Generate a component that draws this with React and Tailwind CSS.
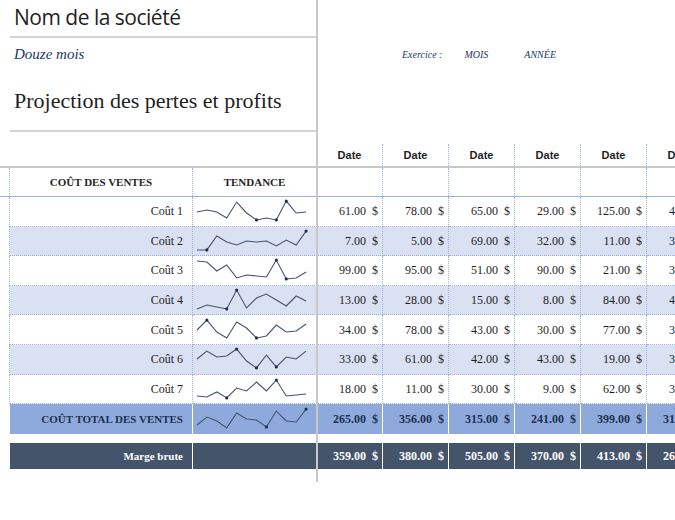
import React from "react";

const cols = "grid grid-cols-[10px_183px_124px_66px_66px_66px_66px_66px_66px]";

const rows = [
  { label: "Coût 1", vals: ["61.00", "78.00", "65.00", "29.00", "125.00", "45.00"], line: [0.55, 0.45, 0.55, 0.85, 0.05, 0.6, 0.95, 0.85, 0.95, 0.0, 0.6, 0.55], dots: [6, 8, 9] },
  { label: "Coût 2", vals: ["7.00", "5.00", "69.00", "32.00", "11.00", "31.00"], line: [0.95, 0.95, 0.25, 0.55, 0.7, 0.5, 0.55, 0.5, 0.75, 0.45, 0.7, 0.0], dots: [1, 11] },
  { label: "Coût 3", vals: ["99.00", "95.00", "51.00", "90.00", "21.00", "36.00"], line: [0.05, 0.1, 0.55, 0.25, 0.9, 0.75, 0.8, 0.85, 0.0, 0.95, 0.9, 0.6], dots: [8, 9] },
  { label: "Coût 4", vals: ["13.00", "28.00", "15.00", "8.00", "84.00", "43.00"], line: [0.95, 0.75, 0.85, 0.95, 0.0, 0.9, 0.4, 0.2, 0.5, 0.8, 0.3, 0.55], dots: [3, 4] },
  { label: "Coût 5", vals: ["34.00", "78.00", "43.00", "30.00", "77.00", "37.00"], line: [0.5, 0.0, 0.6, 0.9, 0.1, 0.4, 0.9, 0.8, 0.25, 0.6, 0.55, 0.2], dots: [1, 6] },
  { label: "Coût 6", vals: ["33.00", "61.00", "42.00", "43.00", "19.00", "38.00"], line: [0.5, 0.1, 0.4, 0.35, 0.0, 0.6, 0.95, 0.3, 0.9, 0.4, 0.5, 0.1], dots: [4, 6, 8] },
  { label: "Coût 7", vals: ["18.00", "11.00", "30.00", "9.00", "62.00", "39.00"], line: [0.85, 0.9, 0.65, 0.95, 0.45, 0.6, 0.15, 0.6, 0.05, 0.85, 0.8, 0.75], dots: [3, 8] },
];

const total = { vals: ["265.00", "356.00", "315.00", "241.00", "399.00", "312.00"], line: [0.8, 0.4, 0.6, 0.95, 0.2, 0.5, 0.55, 0.9, 0.1, 0.6, 0.65, 0.0], dots: [7, 11] };
const marge = ["359.00", "380.00", "505.00", "370.00", "413.00", "260.00"];

function Spark({ line, dots }) {
  const pts = line.map((y, i) => [4 + i * 10, 3 + y * 20]);
  return (
    <svg width="124" height="26" viewBox="0 0 124 26">
      <polyline points={pts.map((p) => p.join(",")).join(" ")} fill="none" stroke="#44546a" strokeWidth="1.1" />
      {dots.map((d) => (
        <circle key={d} cx={pts[d][0]} cy={pts[d][1]} r="1.6" fill="#1f2f4f" />
      ))}
    </svg>
  );
}

const serif = { fontFamily: "'Liberation Serif', serif" };

export default function App() {
  return (
    <div className="relative w-[675px] h-[520px] overflow-hidden bg-white text-[#1f1f1f]" style={{ fontFamily: "'Liberation Sans', sans-serif" }}>
      {/* header */}
      <div className="w-[307px] h-[38px] ml-[10px] border-b-2 border-[#d4d4d4] flex items-center pl-[4px] text-[21px]" style={{ fontFamily: "'Open Sans', sans-serif", letterSpacing: "-0.5px" }}>
        Nom de la société
      </div>
      <div className="flex h-[33px] items-center">
        <div className="w-[317px] pl-[14px] italic text-[15px] text-[#203864]" style={serif}>Douze mois</div>
        <div className="flex italic text-[10px] text-[#203864]" style={serif}>
          <span className="ml-[85px]">Exercice :</span>
          <span className="ml-[22px]">MOIS</span>
          <span className="ml-[36px]">ANNÉE</span>
        </div>
      </div>
      <div className="w-[307px] ml-[10px] h-[61px] border-b-2 border-[#d4d4d4] flex items-center pl-[4px] text-[22px]" style={serif}>
        Projection des pertes et profits
      </div>

      {/* date row */}
      <div className={`${cols} h-[36px] items-end border-b-2 border-[#c8c8c8]`}>
        <div /><div /><div />
        {[0, 1, 2, 3, 4, 5].map((i) => (
          <div key={i} className="h-[22px] flex items-center justify-center text-[11px] font-bold border-r border-dotted border-[#9bb3dd]">Date</div>
        ))}
      </div>

      {/* table header */}
      <div className={`${cols} h-[29px] border-b border-[#9bb3dd] text-[11px] font-bold`} style={serif}>
        <div className="border-r border-dotted border-[#9bb3dd]" />
        <div className="flex items-center justify-center border-r border-dotted border-[#9bb3dd]">COÛT DES VENTES</div>
        <div className="flex items-center justify-center border-r border-dotted border-[#9bb3dd]">TENDANCE</div>
        {[0, 1, 2, 3, 4, 5].map((i) => (
          <div key={i} className="border-r border-dotted border-[#9bb3dd]" />
        ))}
      </div>

      {rows.map((r, k) => (
        <div key={r.label} className={`${cols} h-[29.6px] text-[12px]`} style={serif}>
          <div className="border-r border-dotted border-[#9bb3dd]" />
          <div className={`flex items-center justify-end pr-[9px] border-r border-dotted border-[#9bb3dd] border-b border-b-[#9bb3dd] ${k % 2 ? "bg-[#dae1f3]" : ""}`}>{r.label}</div>
          <div className={`flex items-center justify-center border-r border-dotted border-[#9bb3dd] border-b border-b-[#9bb3dd] ${k % 2 ? "bg-[#dae1f3]" : ""}`}>
            <Spark line={r.line} dots={r.dots} />
          </div>
          {r.vals.map((v, i) => (
            <div key={i} className={`flex items-center justify-end pr-[4px] gap-[6px] border-r border-dotted border-[#9bb3dd] border-b border-b-[#9bb3dd] ${k % 2 ? "bg-[#dae1f3]" : ""}`}>
              <span>{v}</span><span>$</span>
            </div>
          ))}
        </div>
      ))}

      {/* total */}
      <div className={`${cols} h-[30px] text-[12px] font-bold text-[#1f2f4f]`} style={serif}>
        <div />
        <div className="bg-[#8eaadc] flex items-center justify-end pr-[9px] border-r border-white text-[11px]">COÛT TOTAL DES VENTES</div>
        <div className="bg-[#8eaadc] flex items-center justify-center border-r border-white"><Spark line={total.line} dots={total.dots} /></div>
        {total.vals.map((v, i) => (
          <div key={i} className="bg-[#8eaadc] flex items-center justify-end pr-[4px] gap-[6px] border-r border-white">
            <span>{v}</span><span>$</span>
          </div>
        ))}
      </div>

      {/* marge */}
      <div className={`${cols} h-[26px] mt-[9px] text-[12px] font-bold text-white`} style={serif}>
        <div />
        <div className="bg-[#44546a] flex items-center justify-end pr-[9px] border-r border-white text-[11px]">Marge brute</div>
        <div className="bg-[#44546a] border-r border-white" />
        {marge.map((v, i) => (
          <div key={i} className="bg-[#44546a] flex items-center justify-end pr-[4px] gap-[6px] border-r border-white">
            <span>{v}</span><span>$</span>
          </div>
        ))}
      </div>

      {/* freeze pane line */}
      <div className="absolute left-[316px] top-0 w-[2px] h-[482px] bg-[#c8c8c8]" />
    </div>
  );
}
